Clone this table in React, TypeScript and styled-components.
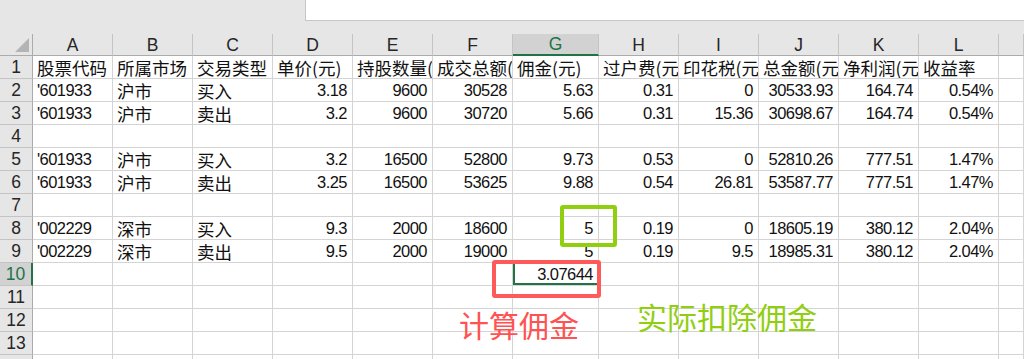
import styled, { createGlobalStyle, css } from "styled-components";

const GlobalStyle = createGlobalStyle`
  html, body {
    margin: 0;
    padding: 0;
    background: #e6e6e6;
  }
  * {
    box-sizing: border-box;
  }
`;

const columns = ["A", "B", "C", "D", "E", "F", "G", "H", "I", "J", "K", "L", ""];

type Row = (string | number | null)[];

// null = empty cell, string = text (left), string prefixed with # = right aligned
const rows: Row[] = [
  ["股票代码", "所属市场", "交易类型", "单价(元)", "持股数量(", "成交总额(", "佣金(元)", "过户费(元", "印花税(元", "总金额(元", "净利润(元", "收益率"],
  ["'601933", "沪市", "买入", 3.18, 9600, 30528, 5.63, 0.31, 0, 30533.93, 164.74, "#0.54%"],
  ["'601933", "沪市", "卖出", 3.2, 9600, 30720, 5.66, 0.31, 15.36, 30698.67, 164.74, "#0.54%"],
  [],
  ["'601933", "沪市", "买入", 3.2, 16500, 52800, 9.73, 0.53, 0, 52810.26, 777.51, "#1.47%"],
  ["'601933", "沪市", "卖出", 3.25, 16500, 53625, 9.88, 0.54, 26.81, 53587.77, 777.51, "#1.47%"],
  [],
  ["'002229", "深市", "买入", 9.3, 2000, 18600, 5, 0.19, 0, 18605.19, 380.12, "#2.04%"],
  ["'002229", "深市", "卖出", 9.5, 2000, 19000, 5, 0.19, 9.5, 18985.31, 380.12, "#2.04%"],
  [null, null, null, null, null, null, 3.07644],
  [],
  [],
  [],
  [],
];

const SELECTED_COL = 6;
const SELECTED_ROW = 9;

export default function App() {
  return (
    <Page>
      <GlobalStyle />
      <TopBar>
        <NameBox />
        <FormulaBox />
      </TopBar>

      <Sheet>
        <Corner>
          <CornerTriangle />
        </Corner>
        {columns.map((c, i) => (
          <ColHeader key={c + i} $active={i === SELECTED_COL}>
            {c}
          </ColHeader>
        ))}

        {rows.map((row, r) => (
          <RowGroup key={r} row={row} index={r} />
        ))}
      </Sheet>

      <RedFrame />
      <GreenFrame />
      <RedNote>计算佣金</RedNote>
      <GreenNote>实际扣除佣金</GreenNote>
    </Page>
  );
}

function RowGroup({ row, index }: { row: Row; index: number }) {
  return (
    <>
      <RowHeader $active={index === SELECTED_ROW}>
        {index < 13 ? index + 1 : ""}
      </RowHeader>
      {columns.map((_, c) => {
        const v = row[c];
        const selected = index === SELECTED_ROW && c === SELECTED_COL;
        if (v === null || v === undefined) {
          return <Cell key={c} $selected={selected} />;
        }
        if (typeof v === "number") {
          return (
            <Cell key={c} $num $selected={selected}>
              {v}
            </Cell>
          );
        }
        if (v.startsWith("#")) {
          return (
            <Cell key={c} $num>
              {v.slice(1)}
            </Cell>
          );
        }
        return (
          <Cell key={c} $code={v.startsWith("'")}>
            {v}
          </Cell>
        );
      })}
    </>
  );
}

const Page = styled.div`
  position: relative;
  width: 1024px;
  height: 359px;
  overflow: hidden;
  background: #e6e6e6;
`;

const TopBar = styled.div`
  display: flex;
  height: 21px;
  margin-bottom: 13px;
`;

const NameBox = styled.div`
  width: 305px;
`;

const FormulaBox = styled.div`
  flex: 1;
  background: #ffffff;
  border-left: 1px solid #c6c6c6;
  border-bottom: 1px solid #c6c6c6;
`;

const Sheet = styled.div`
  display: grid;
  grid-template-columns: 33px repeat(6, 80px) 86px repeat(5, 80px) 1fr;
  grid-template-rows: 22px repeat(14, 23px);
  background: #ffffff;
`;

const headerBase = css`
  background: #e6e6e6;
  color: #262626;
  font-family: "Liberation Sans", Arial, sans-serif;
  font-size: 17.5px;
  display: flex;
  align-items: center;
  justify-content: center;
`;

const Corner = styled.div`
  ${headerBase};
  position: relative;
  border-right: 1px solid #ababab;
  border-bottom: 1px solid #ababab;
`;

const CornerTriangle = styled.div`
  position: absolute;
  right: 3px;
  bottom: 3px;
  width: 0;
  height: 0;
  border-left: 14px solid transparent;
  border-bottom: 14px solid #b4b4b4;
`;

const ColHeader = styled.div<{ $active?: boolean }>`
  ${headerBase};
  border-right: 1px solid #c4c4c4;
  border-bottom: 1px solid #ababab;
  padding-top: 1px;
  ${(p) =>
    p.$active &&
    css`
      background: #d2d2d2;
      color: #217346;
      border-bottom: 2px solid #217346;
    `}
`;

const RowHeader = styled.div<{ $active?: boolean }>`
  ${headerBase};
  border-right: 1px solid #ababab;
  border-bottom: 1px solid #c4c4c4;
  ${(p) =>
    p.$active &&
    css`
      background: #d2d2d2;
      color: #217346;
      border-right: 2px solid #217346;
    `}
`;

const Cell = styled.div<{ $num?: boolean; $code?: boolean; $selected?: boolean }>`
  border-right: 1px solid #d4d4d4;
  border-bottom: 1px solid #d4d4d4;
  padding: 0 4px;
  display: flex;
  align-items: center;
  white-space: nowrap;
  overflow: hidden;
  color: #111;
  font-family: "Noto Sans CJK SC", sans-serif;
  font-size: 17.5px;
  ${(p) =>
    (p.$num || p.$code) &&
    css`
      font-family: "Liberation Sans", Arial, sans-serif;
      font-size: 16.5px;
      letter-spacing: -0.55px;
    `}
  ${(p) =>
    p.$num &&
    css`
      justify-content: flex-end;
      padding-right: 5px;
    `}
  ${(p) =>
    p.$selected &&
    css`
      box-shadow: inset 2px 0 #217346, inset 0 -2px #217346;
    `}
`;

const frame = css`
  position: absolute;
  border-width: 4px;
  border-style: solid;
  border-radius: 3px;
  pointer-events: none;
`;

const RedFrame = styled.div`
  ${frame};
  left: 492px;
  top: 260px;
  width: 109px;
  height: 38px;
  border-color: #ff5a5a;
`;

const GreenFrame = styled.div`
  ${frame};
  left: 560px;
  top: 205px;
  width: 57px;
  height: 42px;
  border-color: #8fcf0f;
`;

const note = css`
  position: absolute;
  font-family: "Noto Sans CJK SC", sans-serif;
  font-size: 30px;
  line-height: 30px;
  white-space: nowrap;
`;

const RedNote = styled.div`
  ${note};
  left: 459px;
  top: 309px;
  color: #ff5252;
`;

const GreenNote = styled.div`
  ${note};
  left: 637px;
  top: 301px;
  color: #8fcf0f;
`;
